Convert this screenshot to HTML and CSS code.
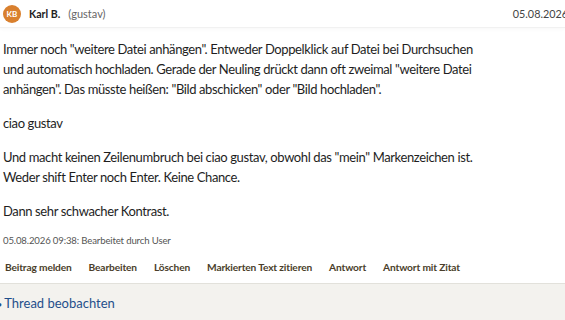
FILE: index.html
```html
<!DOCTYPE html>
<html lang="de">
<head>
    <meta charset="UTF-8">
    <title>Beitrag</title>
    <link rel="stylesheet" href="styles.css">
</head>
<body>
    <div class="post">
        <div class="post-header">
            <div class="author">
                <span class="avatar">KB</span>
                <span class="name">Karl B.</span>
                <span class="user">(gustav)</span>
            </div>
            <span class="date">05.08.2026</span>
        </div>

        <div class="post-body">
            <p>Immer noch "weitere Datei anhängen". Entweder Doppelklick auf Datei bei Durchsuchen<br>
            und automatisch hochladen. Gerade der Neuling drückt dann oft zweimal "weitere Datei<br>
            anhängen". Das müsste heißen: "Bild abschicken" oder "Bild hochladen".</p>
            <p>ciao gustav</p>
            <p>Und macht keinen Zeilenumbruch bei ciao gustav, obwohl das "mein" Markenzeichen ist.<br>
            Weder shift Enter noch Enter. Keine Chance.</p>
            <p>Dann sehr schwacher Kontrast.</p>
        </div>

        <div class="edited">05.08.2026 09:38: Bearbeitet durch User</div>

        <div class="actions">
            <a href="#">Beitrag melden</a>
            <a href="#">Bearbeiten</a>
            <a href="#">Löschen</a>
            <a href="#">Markierten Text zitieren</a>
            <a href="#">Antwort</a>
            <a href="#">Antwort mit Zitat</a>
        </div>
    </div>

    <div class="thread-footer">
        <a href="#" class="watch">Thread beobachten</a>
    </div>
</body>
</html>
```

FILE: styles.css
```css
* {
    margin: 0;
    padding: 0;
    box-sizing: border-box;
}

body {
    font-family: Lato, 'Open Sans', sans-serif;
    color: #1e1e1e;
    background: #fff;
    width: 565px;
    height: 320px;
    overflow: hidden;
}

a {
    text-decoration: none;
}

.post-header {
    display: flex;
    justify-content: space-between;
    align-items: center;
    height: 28px;
    padding-left: 3px;
    border-bottom: 1px solid #f1f1f1;
    box-shadow: 0 2px 3px rgba(0, 0, 0, 0.025);
}

.author {
    display: flex;
    align-items: center;
}

.avatar {
    width: 18px;
    height: 18px;
    border-radius: 50%;
    background: #d9802e;
    color: #fff;
    font-size: 8px;
    font-weight: bold;
    display: flex;
    align-items: center;
    justify-content: center;
    margin-right: 8px;
}

.name {
    font-size: 10.6px;
    font-weight: bold;
    color: #222;
    margin-right: 8px;
}

.user {
    font-size: 11px;
    color: #666;
}

.date {
    font-size: 10.8px;
    color: #444;
    margin-right: -3px;
    white-space: nowrap;
}

.post-body {
    padding: 11px 3px 0;
    font-size: 13px;
    letter-spacing: -0.38px;
    line-height: 20px;
    white-space: nowrap;
}

.post-body p {
    margin-bottom: 14px;
}

.edited {
    padding: 0 3px;
    font-size: 9.6px;
    letter-spacing: -0.15px;
    line-height: 12px;
    color: #555;
}

.actions {
    display: flex;
    gap: 17px;
    padding: 14px 5px 9px;
    border-bottom: 1px solid #e2e1db;
}

.actions a {
    font-size: 10.2px;
    line-height: 13px;
    font-weight: bold;
    letter-spacing: -0.15px;
    color: #4a3e2a;
}

.thread-footer {
    background: #f3f2ee;
    height: 40px;
    padding-top: 8px;
}

.watch {
    color: #1f4f8b;
    font-size: 13px;
    line-height: 16px;
}

.watch::before {
    content: "\2022";
    font-size: 9px;
    margin-left: -3px;
    margin-right: 2px;
}
```
